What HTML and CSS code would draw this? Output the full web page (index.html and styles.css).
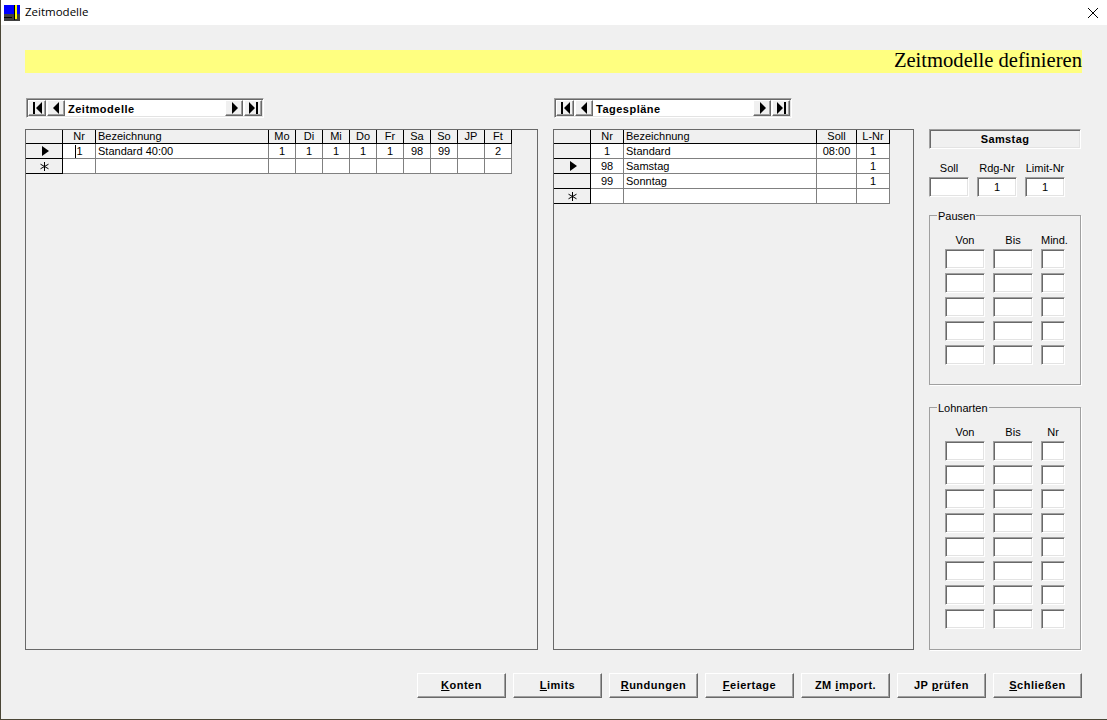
FILE: index.html
```html
<!DOCTYPE html>
<html lang="de">
  <head>
    <meta charset="UTF-8" />
    <title>Zeitmodelle</title>
    <link rel="stylesheet" href="styles.css">
  </head>
  <body>
    <header class="titlebar">
      <svg class="app-icon" width="16" height="16" viewBox="0 0 16 16">
        <rect width="16" height="9" fill="#0000ff" />
        <rect y="9" width="16" height="7" fill="#404040" />
        <path d="M0 12h8v1H0z" fill="#000" />
        <rect x="10" y="0" width="1" height="15" fill="#000" />
        <rect x="11" y="0" width="2" height="14" fill="#ffff00" />
      </svg>
      <span class="app-title">Zeitmodelle</span>
      <svg class="close-icon" width="10" height="10" viewBox="0 0 10 10">
        <path d="M0 0L10 10M10 0L0 10" stroke="#000" stroke-width="1" fill="none" />
      </svg>
    </header>

    <main class="form">
      <h1 class="banner">Zeitmodelle definieren</h1>

      <div class="columns">
        <section class="col-left">
          <div class="navigator">
            <button class="nav-btn"><svg width="11" height="12" viewBox="0 0 11 12"><path d="M1 0h2v12H1zM10 0v12L4 6z" /></svg></button>
            <button class="nav-btn"><svg width="11" height="12" viewBox="0 0 11 12"><path d="M8 0v12L2 6z" /></svg></button>
            <span class="nav-label">Zeitmodelle</span>
            <button class="nav-btn"><svg width="11" height="12" viewBox="0 0 11 12"><path d="M3 0v12l6-6z" /></svg></button>
            <button class="nav-btn"><svg width="11" height="12" viewBox="0 0 11 12"><path d="M1 0v12l6-6zM8 0h2v12H8z" /></svg></button>
          </div>
          <div class="grid-box">
            <table class="data-grid">
              <colgroup>
                <col class="w-ind" /><col class="w-nr" /><col class="w-bez-long" />
                <col class="w-day" /><col class="w-day" /><col class="w-day" /><col class="w-day" /><col class="w-day" />
                <col class="w-day" /><col class="w-day" /><col class="w-day" /><col class="w-day" />
              </colgroup>
              <tr>
                <th></th><th>Nr</th><th class="left">Bezeichnung</th>
                <th>Mo</th><th>Di</th><th>Mi</th><th>Do</th><th>Fr</th><th>Sa</th><th>So</th><th>JP</th><th>Ft</th>
              </tr>
              <tr>
                <th class="ind"><svg class="row-mark" width="7" height="10" viewBox="0 0 7 10"><path d="M0 0v10l7-5z" /></svg></th>
                <td><span class="caret"></span>1</td><td class="left">Standard 40:00</td>
                <td>1</td><td>1</td><td>1</td><td>1</td><td>1</td><td>98</td><td>99</td><td></td><td>2</td>
              </tr>
              <tr>
                <th class="ind"><svg width="9" height="9" viewBox="0 0 9 9"><path d="M4.5 0v9M0.5 2.2l8 4.6M8.5 2.2l-8 4.6" stroke="#000" fill="none" /></svg></th>
                <td></td><td></td><td></td><td></td><td></td><td></td><td></td><td></td><td></td><td></td><td></td>
              </tr>
            </table>
          </div>
        </section>

        <section class="col-mid">
          <div class="navigator">
            <button class="nav-btn"><svg width="11" height="12" viewBox="0 0 11 12"><path d="M1 0h2v12H1zM10 0v12L4 6z" /></svg></button>
            <button class="nav-btn"><svg width="11" height="12" viewBox="0 0 11 12"><path d="M8 0v12L2 6z" /></svg></button>
            <span class="nav-label">Tagespläne</span>
            <button class="nav-btn"><svg width="11" height="12" viewBox="0 0 11 12"><path d="M3 0v12l6-6z" /></svg></button>
            <button class="nav-btn"><svg width="11" height="12" viewBox="0 0 11 12"><path d="M1 0v12l6-6zM8 0h2v12H8z" /></svg></button>
          </div>
          <div class="grid-box">
            <table class="data-grid">
              <colgroup>
                <col class="w-ind" /><col class="w-nr" /><col class="w-bez-short" /><col class="w-soll" /><col class="w-nr" />
              </colgroup>
              <tr>
                <th></th><th>Nr</th><th class="left">Bezeichnung</th><th>Soll</th><th>L-Nr</th>
              </tr>
              <tr>
                <th class="ind"></th><td>1</td><td class="left">Standard</td><td>08:00</td><td>1</td>
              </tr>
              <tr>
                <th class="ind"><svg class="row-mark" width="7" height="10" viewBox="0 0 7 10"><path d="M0 0v10l7-5z" /></svg></th>
                <td>98</td><td class="left">Samstag</td><td></td><td>1</td>
              </tr>
              <tr>
                <th class="ind"></th><td>99</td><td class="left">Sonntag</td><td></td><td>1</td>
              </tr>
              <tr>
                <th class="ind"><svg width="9" height="9" viewBox="0 0 9 9"><path d="M4.5 0v9M0.5 2.2l8 4.6M8.5 2.2l-8 4.6" stroke="#000" fill="none" /></svg></th>
                <td></td><td></td><td></td><td></td>
              </tr>
            </table>
          </div>
        </section>

        <aside class="col-right">
          <div class="day-name">Samstag</div>

          <div class="fields fields-top">
            <label>Soll</label><label>Rdg-Nr</label><label>Limit-Nr</label>
            <input class="field" type="text" />
            <input class="field" type="text" value="1" />
            <input class="field" type="text" value="1" />
          </div>

          <fieldset class="group group-pausen">
            <legend>Pausen</legend>
            <div class="fields fields-group">
              <label>Von</label><label>Bis</label><label>Mind.</label>
              <input class="field" /><input class="field" /><input class="field" />
              <input class="field" /><input class="field" /><input class="field" />
              <input class="field" /><input class="field" /><input class="field" />
              <input class="field" /><input class="field" /><input class="field" />
              <input class="field" /><input class="field" /><input class="field" />
            </div>
          </fieldset>

          <fieldset class="group group-lohn">
            <legend>Lohnarten</legend>
            <div class="fields fields-group">
              <label>Von</label><label>Bis</label><label>Nr</label>
              <input class="field" /><input class="field" /><input class="field" />
              <input class="field" /><input class="field" /><input class="field" />
              <input class="field" /><input class="field" /><input class="field" />
              <input class="field" /><input class="field" /><input class="field" />
              <input class="field" /><input class="field" /><input class="field" />
              <input class="field" /><input class="field" /><input class="field" />
              <input class="field" /><input class="field" /><input class="field" />
              <input class="field" /><input class="field" /><input class="field" />
            </div>
          </fieldset>
        </aside>
      </div>

      <footer class="actions">
        <button class="action-btn"><u>K</u>onten</button>
        <button class="action-btn"><u>L</u>imits</button>
        <button class="action-btn"><u>R</u>undungen</button>
        <button class="action-btn"><u>F</u>eiertage</button>
        <button class="action-btn">ZM <u>i</u>mport.</button>
        <button class="action-btn">JP <u>p</u>rüfen</button>
        <button class="action-btn"><u>S</u>chließen</button>
      </footer>
    </main>
  </body>
</html>
```

FILE: styles.css
```css
html,
body {
  margin: 0;
  height: 100%;
}

body {
  box-sizing: border-box;
  height: 720px;
  overflow: hidden;
  background: #f0f0f0;
  border-left: 1px solid #4a4636;
  border-bottom: 1px solid #4a4636;
  font-family: "Liberation Sans", Arial, sans-serif;
  font-size: 11px;
  color: #000;
}

/* Window title bar */
.titlebar {
  display: flex;
  align-items: center;
  height: 25px;
  margin-left: -1px;
  padding: 0 9px 0 4px;
  background: #fff;
}

.app-title {
  margin: 0 0 2px 5px;
  font-family: "Open Sans", sans-serif;
  font-size: 11.5px;
}

.close-icon {
  margin-left: auto;
}

/* Form body */
.form {
  padding: 25px 25px 0 24px;
}

.banner {
  height: 23px;
  margin: 0 0 25px;
  background: #ffff80;
  font-family: "Liberation Serif", "Times New Roman", serif;
  font-size: 20.6px;
  font-weight: normal;
  line-height: 21px;
  text-align: right;
}

.columns {
  display: flex;
  gap: 15px;
}

.col-left {
  width: 513px;
}

.col-mid {
  width: 361px;
}

.col-right {
  width: 152px;
  padding-top: 31px;
}

/* Record navigator */
.navigator {
  display: flex;
  box-sizing: border-box;
  width: 238px;
  height: 20px;
  margin: 0 0 11px 1px;
  padding: 1px;
  background: #fff;
  border: 1px solid;
  border-color: #a0a0a0 #fff #fff #a0a0a0;
  box-shadow: inset 1px 1px 0 #696969, inset -1px -1px 0 #e3e3e3;
}

.nav-btn {
  display: flex;
  align-items: center;
  justify-content: center;
  box-sizing: border-box;
  width: 18px;
  height: 16px;
  margin: 0 1px 0 0;
  padding: 0;
  background: #f0f0f0;
  border: 1px solid;
  border-color: #fff #696969 #696969 #fff;
  box-shadow: inset -1px -1px 0 #a0a0a0;
}

.nav-btn:last-child {
  margin-right: 0;
}

.nav-label {
  flex: 1;
  padding-left: 2px;
  font-weight: bold;
  letter-spacing: 0.5px;
  line-height: 18px;
}

/* Data grids */
.grid-box {
  box-sizing: border-box;
  height: 521px;
  border: 1px solid #696969;
}

.data-grid {
  table-layout: fixed;
  width: 0;
  border-collapse: separate;
  border-spacing: 0;
}

.w-ind {
  width: 37px;
}

.w-nr {
  width: 33px;
}

.w-bez-long {
  width: 173px;
}

.w-bez-short {
  width: 193px;
}

.w-day {
  width: 27px;
}

.w-soll {
  width: 40px;
}

.data-grid th,
.data-grid td {
  box-sizing: border-box;
  height: 15px;
  padding: 0;
  overflow: hidden;
  font-size: 11px;
  font-weight: normal;
  line-height: 13px;
  text-align: center;
  white-space: nowrap;
}

.data-grid th {
  background: #f0f0f0;
  border-right: 1px solid #000;
  border-bottom: 1px solid #000;
}

.data-grid tr:first-child th {
  height: 14px;
}

.data-grid td {
  background: #fff;
  border-right: 1px solid #808080;
  border-bottom: 1px solid #808080;
}

.data-grid .left {
  padding-left: 2px;
  text-align: left;
}

.data-grid .ind svg {
  display: block;
  margin: 0 auto;
}

.data-grid .ind .row-mark {
  margin: 0 0 0 16px;
}

.caret {
  display: inline-block;
  height: 13px;
  border-left: 1px solid #000;
  vertical-align: top;
}

/* Right hand panel */
.day-name {
  box-sizing: border-box;
  height: 20px;
  margin-bottom: 13px;
  border: 1px solid;
  border-color: #a0a0a0 #fff #fff #a0a0a0;
  box-shadow: inset 1px 1px 0 #696969, inset -1px -1px 0 #e3e3e3;
  font-weight: bold;
  letter-spacing: 0.4px;
  line-height: 18px;
  text-align: center;
}

.fields {
  display: grid;
  gap: 4px 8px;
}

.fields label {
  height: 11px;
  line-height: 13px;
  text-align: center;
}

.fields-top {
  grid-template-columns: 40px 40px 40px;
  margin-bottom: 12px;
}

.fields-group {
  grid-template-columns: 40px 40px 24px;
}

.field {
  box-sizing: border-box;
  width: 100%;
  height: 20px;
  padding: 0;
  background: #fff;
  border: 1px solid;
  border-color: #a0a0a0 #fff #fff #a0a0a0;
  border-radius: 0;
  box-shadow: inset 1px 1px 0 #696969, inset -1px -1px 0 #e3e3e3;
  font-family: inherit;
  font-size: 11px;
  text-align: center;
  outline: none;
}

.group {
  box-sizing: border-box;
  margin: 0;
  padding: 12px 0 0 15px;
  border: 1px solid #a0a0a0;
  box-shadow: 1px 1px 0 #fff;
}

.group legend {
  height: 13px;
  margin-left: -8px;
  padding: 0 1px;
  line-height: 15px;
}

.group-pausen {
  height: 176px;
  margin-bottom: 16px;
}

.group-lohn {
  height: 249px;
}

/* Bottom buttons */
.actions {
  display: flex;
  justify-content: flex-end;
  gap: 7px;
  margin-top: 23px;
}

.action-btn {
  box-sizing: border-box;
  width: 89px;
  height: 25px;
  padding: 0 0 2px;
  background: #f0f0f0;
  border: 1px solid;
  border-color: #fff #696969 #696969 #fff;
  box-shadow: inset -1px -1px 0 #a0a0a0;
  font-family: inherit;
  font-size: 11px;
  font-weight: bold;
  letter-spacing: 0.5px;
  color: #000;
}
```
